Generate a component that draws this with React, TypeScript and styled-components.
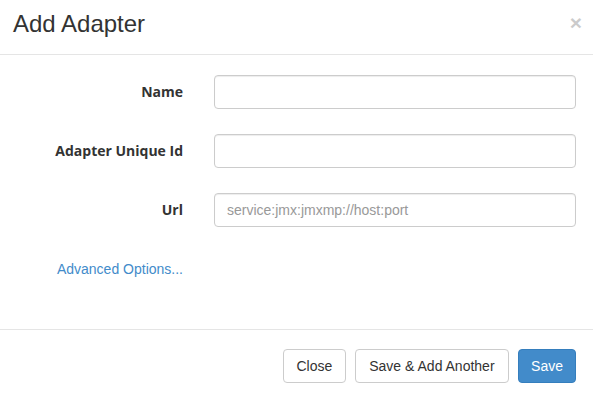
import styled, { createGlobalStyle } from 'styled-components';

const GlobalStyle = createGlobalStyle`
  html, body {
    margin: 0;
    padding: 0;
    background: #fff;
  }
  body {
    font-family: "Liberation Sans", Arial, sans-serif;
    font-size: 14px;
    color: #333;
  }
  * {
    box-sizing: border-box;
  }
`;

const Modal = styled.div`
  width: 593px;
  background: #fff;
`;

const Header = styled.div`
  display: flex;
  justify-content: space-between;
  align-items: flex-start;
  height: 55px;
  padding: 11px 11px 0 13px;
  border-bottom: 1px solid #e5e5e5;
`;

const Title = styled.h4`
  margin: 0;
  font-size: 24px;
  font-weight: 400;
  line-height: 26.4px;
  color: #333;
`;

const CloseX = styled.button`
  padding: 0;
  margin-top: 1px;
  border: 0;
  background: transparent;
  font-family: "Liberation Sans", Arial, sans-serif;
  font-size: 21px;
  font-weight: 700;
  line-height: 1;
  color: #000;
  opacity: 0.2;
  cursor: pointer;
`;

const Body = styled.form`
  display: flex;
  flex-direction: column;
  gap: 25px;
  padding: 20px 0 43px 15px;
`;

const Row = styled.div`
  display: grid;
  grid-template-columns: 168px 362px;
  column-gap: 31px;
  align-items: center;
  height: 34px;
`;

const Label = styled.label`
  text-align: right;
  font-family: "Open Sans", "Liberation Sans", sans-serif;
  font-size: 14px;
  font-weight: 700;
  line-height: 34px;
  color: #333;
`;

const Input = styled.input`
  width: 100%;
  height: 34px;
  padding: 6px 12px;
  border: 1px solid #ccc;
  border-radius: 4px;
  box-shadow: inset 0 1px 1px rgba(0, 0, 0, 0.075);
  font-family: "Liberation Sans", Arial, sans-serif;
  font-size: 14px;
  color: #555;
  outline: none;

  &::placeholder {
    color: #999;
  }
`;

const Link = styled.a`
  text-align: right;
  font-size: 14px;
  line-height: 34px;
  color: #428bca;
  text-decoration: none;
  cursor: pointer;
`;

const Footer = styled.div`
  display: flex;
  justify-content: flex-end;
  gap: 9px;
  padding: 19px 17px 20px 20px;
  border-top: 1px solid #e5e5e5;
`;

const Button = styled.button<{ $primary?: boolean; $pad?: number }>`
  height: 34px;
  padding: 6px ${(p) => p.$pad ?? 12}px;
  border: 1px solid ${(p) => (p.$primary ? '#357ebd' : '#ccc')};
  border-radius: 4px;
  background: ${(p) => (p.$primary ? '#428bca' : '#fff')};
  color: ${(p) => (p.$primary ? '#fff' : '#333')};
  font-family: "Liberation Sans", Arial, sans-serif;
  font-size: 14px;
  line-height: 20px;
  cursor: pointer;
`;

const fields = [
  { id: 'name', label: 'Name', placeholder: '' },
  { id: 'uid', label: 'Adapter Unique Id', placeholder: '' },
  { id: 'url', label: 'Url', placeholder: 'service:jmx:jmxmp://host:port' },
];

export default function App() {
  return (
    <>
      <GlobalStyle />
      <Modal>
        <Header>
          <Title>Add Adapter</Title>
          <CloseX type="button">×</CloseX>
        </Header>
        <Body onSubmit={(e) => e.preventDefault()}>
          {fields.map((f) => (
            <Row key={f.id}>
              <Label htmlFor={f.id}>{f.label}</Label>
              <Input id={f.id} placeholder={f.placeholder} />
            </Row>
          ))}
          <Row>
            <Link>Advanced Options...</Link>
          </Row>
        </Body>
        <Footer>
          <Button type="button" $pad={12.5}>Close</Button>
          <Button type="button" $pad={13.5}>Save &amp; Add Another</Button>
          <Button type="button" $primary>
            Save
          </Button>
        </Footer>
      </Modal>
    </>
  );
}
